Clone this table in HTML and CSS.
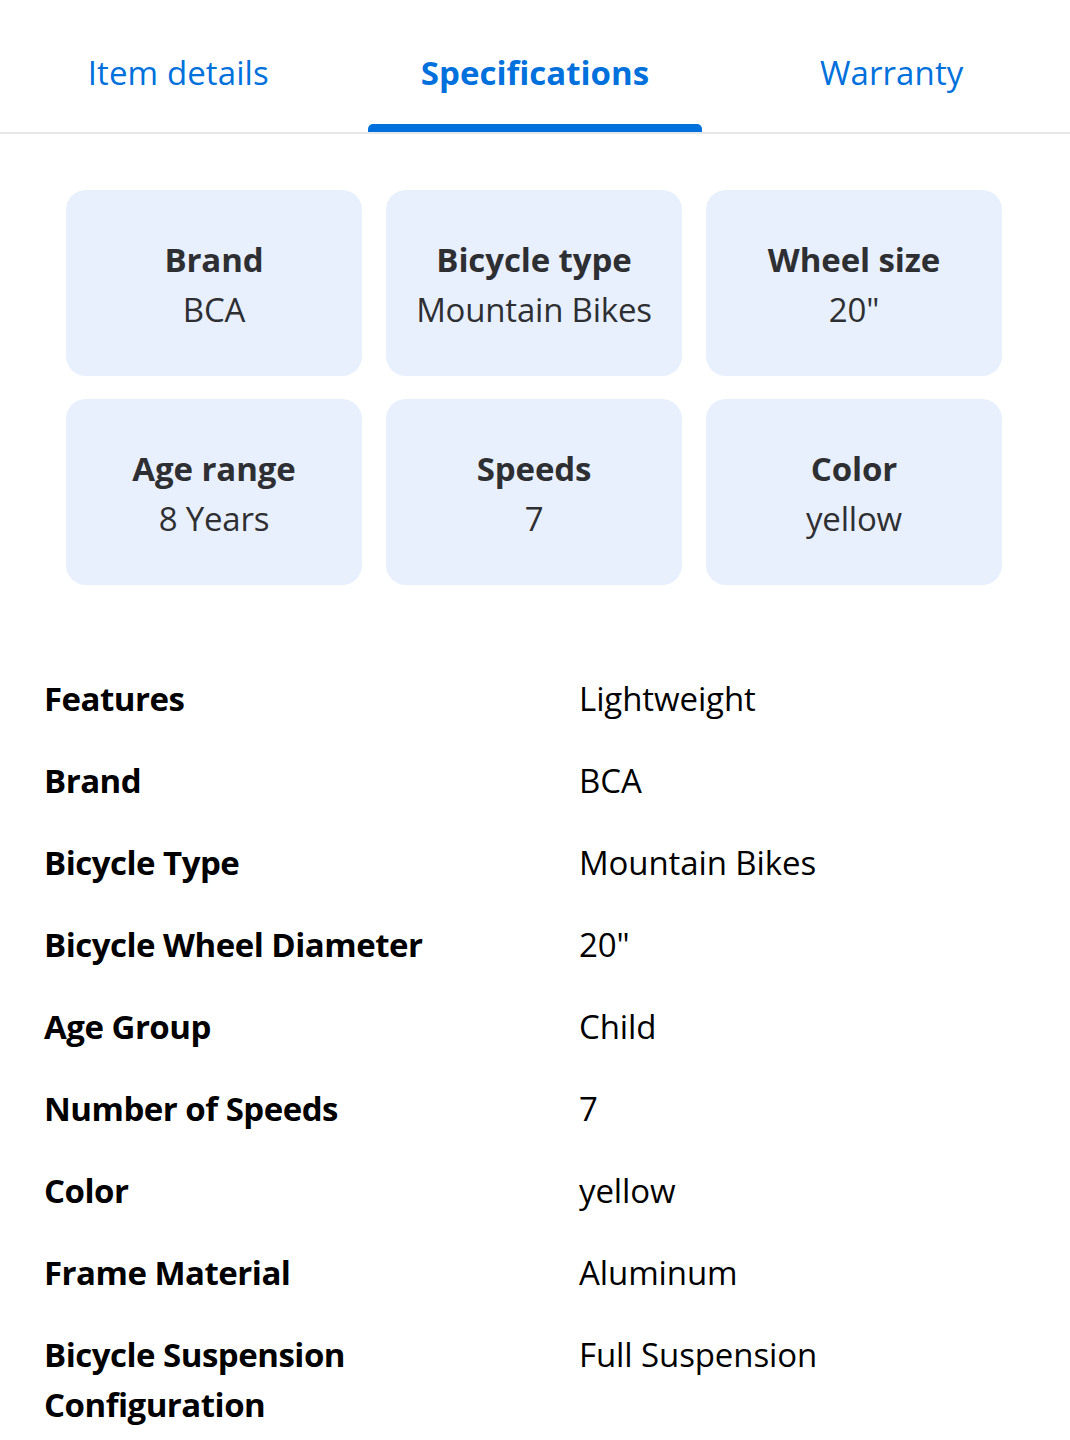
FILE: index.html
```html
<!DOCTYPE html>
<html lang="en">
<head>
<meta charset="utf-8">
<title>Specifications</title>
<link rel="stylesheet" href="styles.css">
</head>
<body>
<nav class="tabs">
  <div class="tab"><span class="tab-label">Item details</span></div>
  <div class="tab tab-active"><span class="tab-label">Specifications</span><span class="tab-bar"></span></div>
  <div class="tab"><span class="tab-label">Warranty</span></div>
</nav>
<section class="cards">
  <div class="card"><div class="card-title">Brand</div><div class="card-value">BCA</div></div>
  <div class="card"><div class="card-title">Bicycle type</div><div class="card-value">Mountain Bikes</div></div>
  <div class="card"><div class="card-title">Wheel size</div><div class="card-value">20"</div></div>
  <div class="card"><div class="card-title">Age range</div><div class="card-value">8 Years</div></div>
  <div class="card"><div class="card-title">Speeds</div><div class="card-value">7</div></div>
  <div class="card"><div class="card-title">Color</div><div class="card-value">yellow</div></div>
</section>
<dl class="specs">
  <dt>Features</dt><dd>Lightweight</dd>
  <dt>Brand</dt><dd>BCA</dd>
  <dt>Bicycle Type</dt><dd>Mountain Bikes</dd>
  <dt>Bicycle Wheel Diameter</dt><dd>20"</dd>
  <dt>Age Group</dt><dd>Child</dd>
  <dt>Number of Speeds</dt><dd>7</dd>
  <dt>Color</dt><dd>yellow</dd>
  <dt>Frame Material</dt><dd>Aluminum</dd>
  <dt>Bicycle Suspension Configuration</dt><dd>Full Suspension</dd>
</dl>
</body>
</html>
```
FILE: styles.css
```css
html, body {
  margin: 0;
  padding: 0;
  background: #ffffff;
}
body {
  font-family: "Open Sans", "Noto Sans", sans-serif;
  width: 1070px;
  overflow: hidden;
}
.tabs {
  display: grid;
  grid-template-columns: repeat(3, 1fr);
  height: 132px;
  border-bottom: 2px solid #e6e7e8;
}
.tab {
  display: flex;
  flex-direction: column;
  align-items: center;
  position: relative;
}
.tab-label {
  margin-top: 48px;
  font-size: 33px;
  line-height: 50px;
  color: #0071dc;
  letter-spacing: 0.1px;
}
.tab-active .tab-label {
  font-weight: 700;
  letter-spacing: 0;
}
.tab-bar {
  position: absolute;
  left: 11px;
  right: 11px;
  bottom: 0;
  height: 8px;
  background: #0071dc;
  border-radius: 5px 5px 0 0;
}
.cards {
  display: grid;
  grid-template-columns: repeat(3, 296px);
  grid-auto-rows: 186px;
  column-gap: 24px;
  row-gap: 23px;
  padding: 56px 0 0 66px;
}
.card {
  background: #e8f0fd;
  border-radius: 20px;
  display: flex;
  flex-direction: column;
  justify-content: center;
  align-items: center;
  padding-top: 4px;
  box-sizing: border-box;
  color: #2e2f32;
  font-size: 33px;
  line-height: 50px;
}
.card-title {
  font-weight: 700;
  letter-spacing: -0.1px;
}
.card-value {
  letter-spacing: -0.2px;
}
.specs {
  display: grid;
  grid-template-columns: 535px 1fr;
  margin: 73px 0 0 44px;
  font-size: 33px;
  line-height: 50px;
  color: #000;
}
.specs dt, .specs dd {
  margin: 0;
  padding: 16px 0;
}
.specs dt {
  font-weight: 700;
  letter-spacing: -0.5px;
  padding-right: 60px;
}
.specs dd {
  letter-spacing: -0.1px;
}
```
